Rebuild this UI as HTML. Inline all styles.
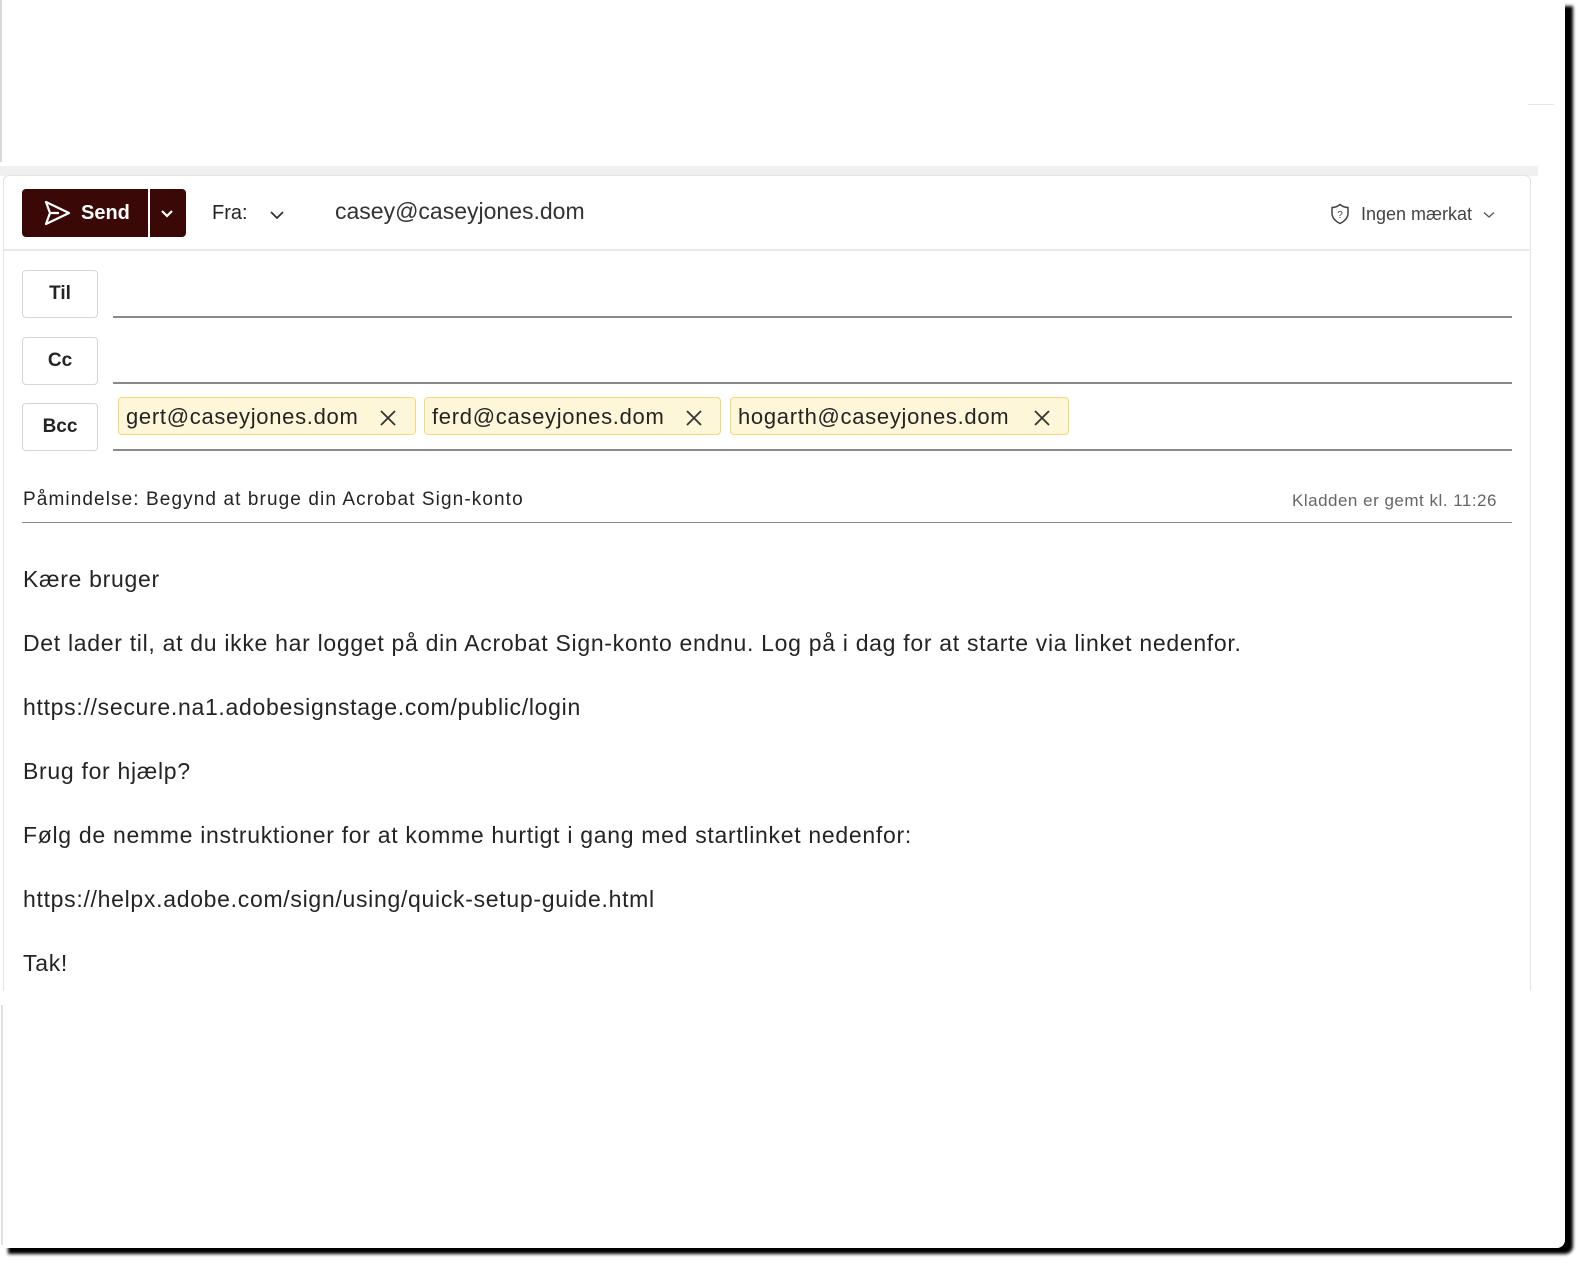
<!DOCTYPE html>
<html><head><meta charset="utf-8"><style>
html,body{margin:0;padding:0;background:#fff;width:1580px;height:1265px;overflow:hidden;font-family:"Liberation Sans",sans-serif;color:#242424}
.page{position:absolute;left:0;top:0;width:1565px;height:1248px;background:#fff;box-shadow:8px 6px 3px #000;border-radius:0 0 8px 0}
.leftline{position:absolute;left:0;top:0;width:2px;height:162px;background:#d8d8d8}
.topband{position:absolute;left:0;top:166px;width:1538px;height:10px;background:#f0f0f0}
.card{position:absolute;left:3px;top:175px;width:1526px;height:815px;background:#fff;border:1px solid #e3e3e3;border-bottom:none;border-radius:6px 6px 0 0}
.hdiv{position:absolute;left:4px;top:249px;width:1526px;height:2px;background:#e8e8e8}
.rline{position:absolute;left:1528px;top:104px;width:26px;height:1px;background:#e6e6e6}
.send{position:absolute;left:22px;top:189px;width:164px;height:48px;background:#3b0808;border-radius:4px;color:#fff}
.send .lbl{position:absolute;left:59px;top:13px;font-size:20px;font-weight:bold}
.send .sep{position:absolute;left:126px;top:0;width:2px;height:48px;background:#fff}
.t{position:absolute;white-space:nowrap}
.btn{position:absolute;left:22px;width:74px;height:46px;border:1px solid #d6d6d6;border-radius:4px;font-weight:bold;font-size:19px;text-align:center;line-height:46px;background:#fff}
.uline{position:absolute;left:113px;width:1399px;height:2px;background:#8a8a8a}
.chip{position:absolute;top:397px;height:38px;background:#fdf6d8;border:1px solid #f7d774;border-radius:4px;font-size:22px;letter-spacing:0.7px;line-height:38px;padding-left:7px;box-sizing:border-box}
.chip svg{position:absolute;top:11px}
.body{font-size:23px;letter-spacing:0.7px;color:#242424}
</style></head><body>
<div class="page"></div>
<div class="leftline"></div>
<div class="rline"></div>
<div class="topband"></div>
<div class="card"></div>
<div class="hdiv"></div>
<div class="send">
<svg style="position:absolute;left:21px;top:11px" width="28" height="26" viewBox="0 0 28 26"><path d="M3 2 L26 13 L3 24 L7 13 Z M7 13 H16" fill="none" stroke="#fff" stroke-width="2.2" stroke-linejoin="round"/></svg>
<span class="lbl">Send</span><div class="sep"></div>
<svg style="position:absolute;left:138px;top:20px" width="14" height="10" viewBox="0 0 14 10"><path d="M2 2 L7 7 L12 2" fill="none" stroke="#fff" stroke-width="2.2"/></svg>
</div>
<div class="t" style="left:212px;top:202px;font-size:20px">Fra:</div>
<svg style="position:absolute;left:269px;top:209px" width="16" height="12" viewBox="0 0 16 12"><path d="M2 3 L8 9 L14 3" fill="none" stroke="#333" stroke-width="1.8"/></svg>
<div class="t" style="left:335px;top:198px;font-size:23px;color:#333">casey@caseyjones.dom</div>
<svg style="position:absolute;left:1330px;top:203px" width="20" height="22" viewBox="0 0 20 22"><path d="M10 1.5 C7 4 4 4.5 2 4.5 V10 C2 15 6 18.5 10 20.5 C14 18.5 18 15 18 10 V4.5 C16 4.5 13 4 10 1.5Z" fill="none" stroke="#444" stroke-width="1.5"/><text x="10" y="15" font-size="10" text-anchor="middle" fill="#444" font-family="Liberation Sans">?</text></svg>
<div class="t" style="left:1361px;top:204px;font-size:18px;color:#444">Ingen mærkat</div>
<svg style="position:absolute;left:1483px;top:211px" width="12" height="8" viewBox="0 0 12 8"><path d="M1 1.5 L6 6 L11 1.5" fill="none" stroke="#555" stroke-width="1.3"/></svg>

<div class="btn" style="top:270px">Til</div>
<div class="uline" style="top:316px"></div>
<div class="btn" style="top:337px">Cc</div>
<div class="uline" style="top:382px"></div>
<div class="btn" style="top:403px">Bcc</div>
<div class="uline" style="top:449px"></div>

<div class="chip" style="left:118px;width:298px">gert@caseyjones.dom<svg style="left:260px" width="18" height="18" viewBox="0 0 18 18"><path d="M2 2 L16 16 M16 2 L2 16" stroke="#333" stroke-width="1.8"/></svg></div>
<div class="chip" style="left:424px;width:297px">ferd@caseyjones.dom<svg style="left:260px" width="18" height="18" viewBox="0 0 18 18"><path d="M2 2 L16 16 M16 2 L2 16" stroke="#333" stroke-width="1.8"/></svg></div>
<div class="chip" style="left:730px;width:339px">hogarth@caseyjones.dom<svg style="left:302px" width="18" height="18" viewBox="0 0 18 18"><path d="M2 2 L16 16 M16 2 L2 16" stroke="#333" stroke-width="1.8"/></svg></div>

<div class="t" style="left:23px;top:489px;font-size:19px;letter-spacing:1.1px">Påmindelse: Begynd at bruge din Acrobat Sign-konto</div>
<div class="t" style="left:1292px;top:491px;font-size:17px;letter-spacing:0.5px;color:#666">Kladden er gemt kl. 11:26</div>
<div class="uline" style="left:22px;width:1490px;top:522px;height:1px"></div>

<div class="t body" style="left:23px;top:566px">Kære bruger</div>
<div class="t body" style="left:23px;top:630px">Det lader til, at du ikke har logget på din Acrobat Sign-konto endnu. Log på i dag for at starte via linket nedenfor.</div>
<div class="t body" style="left:23px;top:694px">https://secure.na1.adobesignstage.com/public/login</div>
<div class="t body" style="left:23px;top:758px">Brug for hjælp?</div>
<div class="t body" style="left:23px;top:822px">Følg de nemme instruktioner for at komme hurtigt i gang med startlinket nedenfor:</div>
<div class="t body" style="left:23px;top:886px">https://helpx.adobe.com/sign/using/quick-setup-guide.html</div>
<div class="t body" style="left:23px;top:950px">Tak!</div>
<div style="position:absolute;left:1px;top:1005px;width:2px;height:240px;background:#e0e0e0"></div>
</body></html>
